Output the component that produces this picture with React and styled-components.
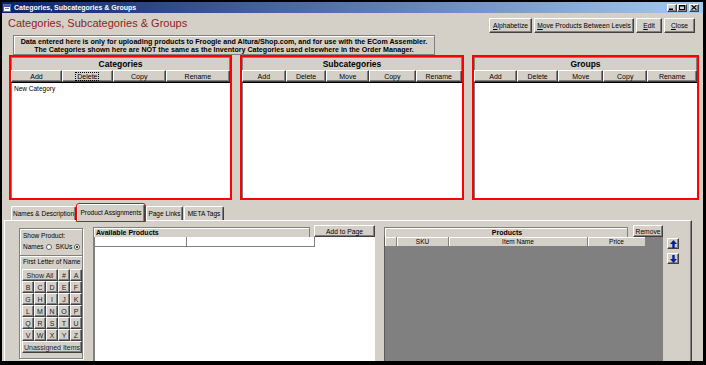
import React from 'react'
import styled, { createGlobalStyle, css } from 'styled-components'

const GlobalStyle = createGlobalStyle`
  html, body { margin: 0; padding: 0; background: #000; }
  body { font-family: "Liberation Sans", Arial, sans-serif; }
  * { box-sizing: border-box; }
  button { font-family: "Liberation Sans", Arial, sans-serif; cursor: default; }
`

const raised = css`
  border-top: 1px solid #fff;
  border-left: 1px solid #fff;
  border-right: 1px solid #404040;
  border-bottom: 1px solid #404040;
  box-shadow: inset -1px -1px 0 #808080;
`

const Window = styled.div`
  width: 706px;
  height: 365px;
  border: 2px solid #000;
  border-right-width: 3px;
  border-bottom-width: 4px;
  background: #d4d0c8;
  display: flex;
  flex-direction: column;
  overflow: hidden;
`

const TitleBar = styled.div`
  height: 11px;
  flex-shrink: 0;
  background: linear-gradient(to right, #0a246a, #a6caf0);
  display: flex;
  align-items: center;
  padding: 0 4px 0 1px;
`

const TitleText = styled.span`
  flex: 1;
  margin-left: 3px;
  color: #fff;
  font-weight: bold;
  font-size: 7px;
  white-space: nowrap;
`

const Controls = styled.div`
  display: flex;
  align-items: center;
`

const CtrlBtn = styled.div`
  width: 10px;
  height: 8px;
  margin-left: ${p => p.$gap || 0}px;
  background: #d4d0c8;
  ${raised};
  display: flex;
  align-items: center;
  justify-content: center;
`

const HeaderRow = styled.div`
  height: 22px;
  flex-shrink: 0;
  display: flex;
  justify-content: space-between;
  align-items: flex-start;
  padding: 3px 8px 0 6px;
`

const Heading = styled.h1`
  margin: 0;
  font-size: 11px;
  line-height: 14px;
  font-weight: normal;
  color: #8f1d1d;
`

const TopButtons = styled.div`
  display: flex;
  gap: 2px;
  margin-top: 2px;
`

const WinButton = styled.button`
  width: ${p => p.$w}px;
  height: ${p => p.$h || 15}px;
  padding: 0;
  background: #d4d0c8;
  ${raised};
  font-size: 6.7px;
  color: #000;
  display: flex;
  align-items: center;
  justify-content: center;
  white-space: nowrap;
  flex-shrink: 0;
`

const InfoBox = styled.div`
  margin-left: 11px;
  width: 422px;
  height: 20px;
  flex-shrink: 0;
  border: 1px solid #808080;
  box-shadow: inset 1px 1px 0 #fff;
  padding-top: 2px;
  text-align: center;
  font-size: 7.1px;
  font-weight: bold;
  line-height: 8px;
  white-space: nowrap;
`

const PanelsRow = styled.div`
  height: 145px;
  flex-shrink: 0;
  display: flex;
  gap: 8px;
  padding-left: 7px;
`

const Panel = styled.section`
  width: ${p => p.$w}px;
  border: 2px solid #f00;
  display: flex;
  flex-direction: column;
`

const PanelHeader = styled.div`
  height: 13px;
  flex-shrink: 0;
  border: 1px solid #808080;
  border-bottom: none;
  text-align: center;
  font-weight: bold;
  font-size: 8.5px;
  line-height: 12px;
`

const ActionRow = styled.div`
  height: 12px;
  flex-shrink: 0;
  display: flex;
`

const ActionBtn = styled.button`
  flex: ${p => p.$grow} 1 0;
  min-width: 0;
  height: 12px;
  padding: 0;
  background: #d4d0c8;
  ${raised};
  font-size: 7px;
  color: #000;
  display: flex;
  align-items: center;
  justify-content: center;
`

const Focus = styled.span`
  border: 1px dotted #000;
  padding: 0 1px;
  line-height: 7px;
`

const ListArea = styled.div`
  flex: 1;
  background: #fff;
  border-top: 1px solid #000;
  border-left: 1px solid #808080;
  padding: 2px 2px;
  font-size: 6.5px;
`

const TabsRow = styled.div`
  height: 16px;
  margin-top: 4px;
  flex-shrink: 0;
  display: flex;
  align-items: flex-end;
  gap: 1px;
  padding-left: 9px;
  position: relative;
  z-index: 1;
`

const Tab = styled.div`
  width: ${p => p.$w}px;
  height: ${p => (p.$active ? 17 : 14)}px;
  margin-bottom: ${p => (p.$active ? -1 : 0)}px;
  background: #d4d0c8;
  border-top: 1px solid #fff;
  border-left: 1px solid #fff;
  border-right: 1px solid #404040;
  box-shadow: inset -1px 0 0 #808080;
  border-radius: 2px 2px 0 0;
  outline: ${p => (p.$active ? '1px solid #f00' : 'none')};
  outline-offset: 0;
  font-size: 6.5px;
  display: flex;
  align-items: center;
  justify-content: center;
  padding-bottom: ${p => (p.$active ? 2 : 0)}px;
  white-space: nowrap;
`

const TabPanel = styled.div`
  flex: 1;
  min-height: 0;
  width: 688px;
  margin-left: 2px;
  border-top: 1px solid #fff;
  border-left: 1px solid #fff;
  border-right: 1px solid #404040;
  box-shadow: inset -1px 0 0 #808080;
  display: flex;
  padding: 4px 0 0 14px;
`

const ShowBox = styled.div`
  width: 64px;
  height: 131px;
  margin-top: 3px;
  border: 1px solid #808080;
  box-shadow: inset 1px 1px 0 #fff, 1px 1px 0 #fff;
  display: flex;
  flex-direction: column;
  flex-shrink: 0;
`

const ShowTop = styled.div`
  height: 27px;
  padding: 2px 0 0 3px;
  border-bottom: 1px solid #808080;
  box-shadow: 0 1px 0 #fff;
  font-size: 6.5px;
  line-height: 9px;
`

const RadioLine = styled.div`
  display: flex;
  align-items: center;
  margin-top: 2px;
`

const Radio = styled.span`
  width: 6px;
  height: 6px;
  margin: 0 ${p => p.$mr || 0}px 0 2px;
  border-radius: 50%;
  background: #fff;
  border: 1px solid #606060;
  display: flex;
  align-items: center;
  justify-content: center;
  &::after {
    content: '';
    width: 2px;
    height: 2px;
    border-radius: 50%;
    background: ${p => (p.$on ? '#000' : 'transparent')};
  }
`

const Caption = styled.div`
  font-size: 6.5px;
  line-height: 10px;
  padding: 1px 0 0 3px;
`

const LetterGrid = styled.div`
  display: grid;
  grid-template-columns: repeat(5, 12px);
  grid-auto-rows: 12px;
  margin: 2px 0 0 2px;
`

const LetterKey = styled.button`
  grid-column: span ${p => p.$span || 1};
  padding: 0;
  background: #d4d0c8;
  ${raised};
  font-size: 7px;
  color: #222;
  display: flex;
  align-items: center;
  justify-content: center;
  white-space: nowrap;
`

const AvailCol = styled.div`
  width: 282px;
  margin-left: 10px;
  display: flex;
  flex-direction: column;
  flex-shrink: 0;
`

const TopLine = styled.div`
  height: 12px;
  flex-shrink: 0;
  display: flex;
  align-items: flex-end;
`

const GridHeader = styled.div`
  width: ${p => p.$w}px;
  height: 10px;
  border: 1px solid #808080;
  border-bottom: none;
  box-shadow: inset 1px 1px 0 #fff;
  font-size: 7px;
  font-weight: bold;
  line-height: 9px;
  padding-left: 2px;
  text-align: ${p => (p.$center ? 'center' : 'left')};
  white-space: nowrap;
`

const SideButton = styled(WinButton)`
  align-self: flex-start;
  margin-left: ${p => p.$ml}px;
`

const WhiteList = styled.div`
  flex: 1;
  background: #fff;
  border-left: 2px solid #808080;
`

const ColRow = styled.div`
  height: 10px;
  display: flex;
`

const ColCell = styled.div`
  width: ${p => p.$w}px;
  height: 10px;
  background: ${p => (p.$gray ? '#d4d0c8' : '#fff')};
  border-right: 1px solid #808080;
  border-bottom: 1px solid #808080;
  ${p => p.$gray && 'box-shadow: inset 1px 1px 0 #fff;'}
  font-size: 6.5px;
  line-height: 9px;
  text-align: center;
  white-space: nowrap;
`

const ProductsCol = styled.div`
  width: 279px;
  margin-left: 9px;
  display: flex;
  flex-direction: column;
  flex-shrink: 0;
`

const GrayList = styled.div`
  flex: 1;
  background: #808080;
  border-left: 1px solid #5a5a5a;
`

const ArrowCol = styled.div`
  margin: 13px 0 0 4px;
  display: flex;
  flex-direction: column;
  gap: 4px;
`

const ArrowBtn = styled.button`
  width: 12px;
  height: 11px;
  padding: 0;
  background: #d4d0c8;
  ${raised};
  display: flex;
  align-items: center;
  justify-content: center;
`

const letters = ['B', 'C', 'D', 'E', 'F', 'G', 'H', 'I', 'J', 'K', 'L', 'M', 'N', 'O', 'P', 'Q', 'R', 'S', 'T', 'U', 'V', 'W', 'X', 'Y', 'Z']

const FormIcon = () => (
  <svg width="8" height="8" viewBox="0 0 8 8">
    <rect x="0.5" y="0.5" width="7" height="7" fill="#fff" stroke="#5a6e9c" />
    <rect x="1" y="1" width="6" height="2" fill="#3a5cb0" />
    <rect x="2" y="4" width="4" height="1" fill="#8a8a8a" />
  </svg>
)

const Arrow = ({ down }) => (
  <svg width="7" height="8" viewBox="0 0 7 8" style={down ? { transform: 'rotate(180deg)' } : undefined}>
    <path d="M3.5 0 L7 4 L4.7 4 L4.7 8 L2.3 8 L2.3 4 L0 4 Z" fill="#0020a0" />
  </svg>
)

const CatPanel = ({ title, w, actions }) => (
  <Panel $w={w}>
    <PanelHeader>{title}</PanelHeader>
    <ActionRow>
      {actions.map(([label, grow, focus]) => (
        <ActionBtn key={label} $grow={grow}>
          {focus ? <Focus>{label}</Focus> : label}
        </ActionBtn>
      ))}
    </ActionRow>
    <ListArea>{title === 'Categories' && 'New Category'}</ListArea>
  </Panel>
)

export default function App() {
  return (
    <>
      <GlobalStyle />
      <Window>
        <TitleBar>
          <FormIcon />
          <TitleText>Categories, Subcategories &amp; Groups</TitleText>
          <Controls>
            <CtrlBtn>
              <svg width="6" height="5" viewBox="0 0 6 5"><rect x="0" y="3.5" width="4" height="1.5" fill="#000" /></svg>
            </CtrlBtn>
            <CtrlBtn>
              <svg width="6" height="5" viewBox="0 0 6 5"><rect x="0.5" y="0.5" width="5" height="4" fill="none" stroke="#000" /><rect x="0" y="0" width="6" height="1.5" fill="#000" /></svg>
            </CtrlBtn>
            <CtrlBtn $gap={2}>
              <svg width="6" height="5" viewBox="0 0 6 5"><path d="M0.5 0.3 L5.5 4.7 M5.5 0.3 L0.5 4.7" stroke="#000" strokeWidth="1.2" /></svg>
            </CtrlBtn>
          </Controls>
        </TitleBar>

        <HeaderRow>
          <Heading>Categories, Subcategories &amp; Groups</Heading>
          <TopButtons>
            <WinButton $w={43}><u>A</u>lphabetize</WinButton>
            <WinButton $w={100}><u>M</u>ove Products Between Levels</WinButton>
            <WinButton $w={26}><u>E</u>dit</WinButton>
            <WinButton $w={31}><u>C</u>lose</WinButton>
          </TopButtons>
        </HeaderRow>

        <InfoBox>
          Data entered here is only for uploading products to Froogle and Altura/Shop.com, and for use with the ECom Assembler.
          <br />
          The Categories shown here are NOT the same as the Inventory Categories used elsewhere in the Order Manager.
        </InfoBox>

        <PanelsRow>
          <CatPanel
            title="Categories"
            w={223}
            actions={[['Add', 51], ['Delete', 51, true], ['Copy', 53], ['Rename', 65]]}
          />
          <CatPanel
            title="Subcategories"
            w={224}
            actions={[['Add', 44], ['Delete', 41], ['Move', 43], ['Copy', 47], ['Rename', 47]]}
          />
          <CatPanel
            title="Groups"
            w={227}
            actions={[['Add', 43], ['Delete', 41], ['Move', 45], ['Copy', 44], ['Rename', 50]]}
          />
        </PanelsRow>

        <TabsRow>
          <Tab $w={65}>Names &amp; Description</Tab>
          <Tab $w={68} $active>Product Assignments</Tab>
          <Tab $w={37}>Page Links</Tab>
          <Tab $w={40}>META Tags</Tab>
        </TabsRow>

        <TabPanel>
          <ShowBox>
            <ShowTop>
              Show Product:
              <RadioLine>
                Names<Radio $mr={4} />SKUs<Radio $on />
              </RadioLine>
            </ShowTop>
            <Caption>First Letter of Name</Caption>
            <LetterGrid>
              <LetterKey $span={3}>Show All</LetterKey>
              <LetterKey>#</LetterKey>
              <LetterKey>A</LetterKey>
              {letters.map(l => (
                <LetterKey key={l}>{l}</LetterKey>
              ))}
              <LetterKey $span={5}>Unassigned Items</LetterKey>
            </LetterGrid>
          </ShowBox>

          <AvailCol>
            <TopLine>
              <GridHeader $w={217}>Available Products</GridHeader>
              <SideButton $w={61} $h={12} $ml={4}>Add to Page</SideButton>
            </TopLine>
            <WhiteList>
              <ColRow>
                <ColCell $w={92} />
                <ColCell $w={128} />
              </ColRow>
            </WhiteList>
          </AvailCol>

          <ProductsCol>
            <TopLine>
              <GridHeader $w={244} $center>Products</GridHeader>
              <SideButton $w={30} $h={12} $ml={5}>Remove</SideButton>
            </TopLine>
            <GrayList>
              <ColRow>
                <ColCell $w={12} $gray />
                <ColCell $w={52} $gray>SKU</ColCell>
                <ColCell $w={139} $gray>Item Name</ColCell>
                <ColCell $w={58} $gray>Price</ColCell>
              </ColRow>
            </GrayList>
          </ProductsCol>

          <ArrowCol>
            <ArrowBtn><Arrow /></ArrowBtn>
            <ArrowBtn><Arrow down /></ArrowBtn>
          </ArrowCol>
        </TabPanel>
      </Window>
    </>
  )
}
